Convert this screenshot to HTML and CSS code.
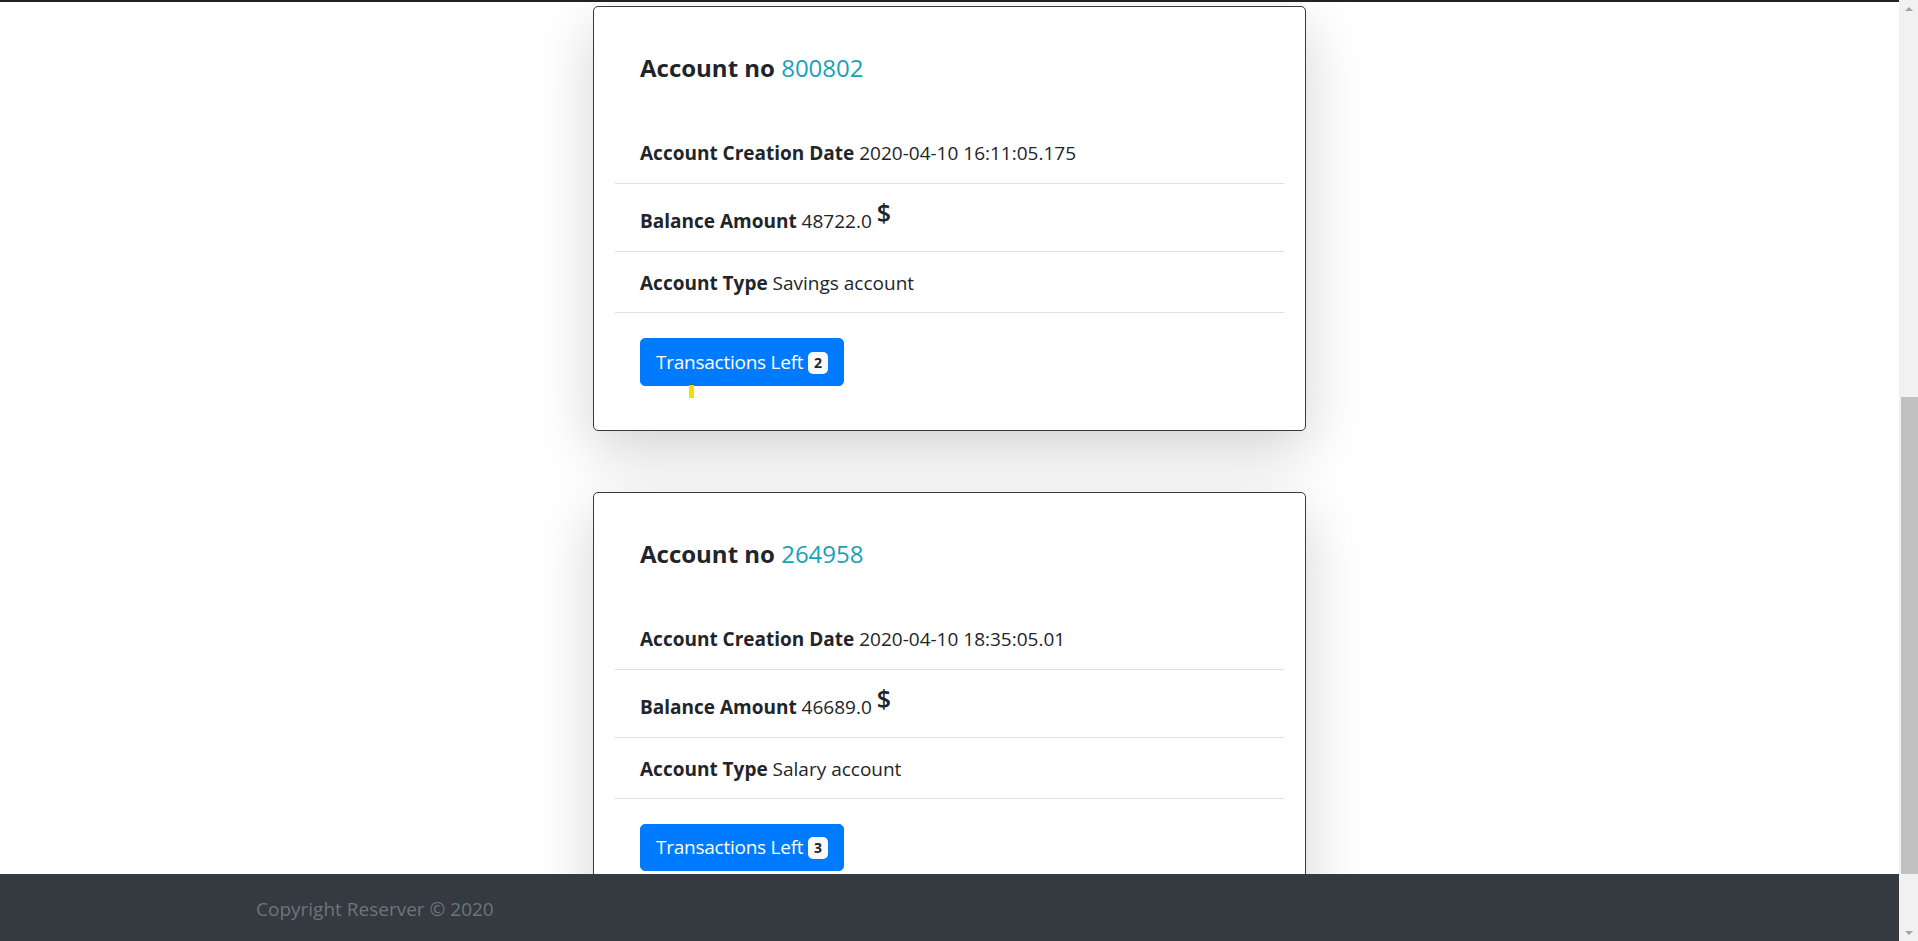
FILE: index.html
```html
<!DOCTYPE html>
<html lang="en">
<head>
<meta charset="utf-8">
<title>Accounts</title>
<link rel="stylesheet" href="styles.css">
</head>
<body>
<div class="page">
  <div class="main">
    <div class="topbar"></div>
    <div class="content">
      <div class="card">
        <div class="card-head">
          <h5 class="title">Account no <span class="accno">800802</span></h5>
        </div>
        <ul class="list">
          <li class="item item-first"><b>Account Creation Date</b> 2020-04-10 16:11:05.175</li>
          <li class="item item-balance"><b>Balance Amount</b> 48722.0 <sup class="cur">$</sup></li>
          <li class="item item-last"><b>Account Type</b> Savings account</li>
        </ul>
        <div class="actions">
          <button class="btn">Transactions Left <span class="badge">2</span></button>
          <span class="caret-mark"></span>
        </div>
      </div>
      <div class="card">
        <div class="card-head">
          <h5 class="title">Account no <span class="accno">264958</span></h5>
        </div>
        <ul class="list">
          <li class="item item-first"><b>Account Creation Date</b> 2020-04-10 18:35:05.01</li>
          <li class="item item-balance"><b>Balance Amount</b> 46689.0 <sup class="cur">$</sup></li>
          <li class="item item-last"><b>Account Type</b> Salary account</li>
        </ul>
        <div class="actions">
          <button class="btn">Transactions Left <span class="badge">3</span></button>
        </div>
      </div>
    </div>
    <footer class="footer"><span class="copy">Copyright Reserver © 2020</span></footer>
  </div>
  <div class="scrollbar">
    <div class="sb-btn sb-up"><span class="tri-up"></span></div>
    <div class="sb-track"><div class="sb-thumb"></div></div>
    <div class="sb-btn sb-down"><span class="tri-down"></span></div>
  </div>
</div>
</body>
</html>
```

FILE: styles.css
```css
html, body {
  margin: 0;
  padding: 0;
  height: 100%;
}
body {
  font-family: "Open Sans", "Noto Sans", "Liberation Sans", sans-serif;
  font-size: 19px;
  line-height: 30px;
  color: #212529;
  background: #fff;
  overflow: hidden;
}
.page {
  display: flex;
  height: 941px;
}
.main {
  flex: 1;
  display: flex;
  flex-direction: column;
  min-width: 0;
}
.topbar {
  height: 2px;
  background: #222;
  flex-shrink: 0;
}
.content {
  flex: 1;
  overflow: hidden;
  display: flex;
  flex-direction: column;
  align-items: center;
  gap: 61px;
  padding-top: 4px;
  position: relative;
}
.card {
  width: 713px;
  box-sizing: border-box;
  flex-shrink: 0;
  background: #fff;
  border: 1px solid #343a40;
  border-radius: 5px;
  box-shadow: 0 20px 60px rgba(0, 0, 0, .175);
  padding: 20px 21px 20px;
}
.card-head {
  padding: 26px 25px 0;
  margin-bottom: 39px;
}
.title {
  margin: 0;
  font-size: 24px;
  line-height: 30px;
  font-weight: 700;
}
.accno {
  color: #17a2b8;
  font-weight: 400;
}
.list {
  list-style: none;
  margin: 0;
  padding: 0;
}
.item {
  padding: 16px 25px 15px;
  border-bottom: 1px solid #dfdfdf;
}
.item b {
  font-weight: 700;
}
.item-balance {
  padding-top: 22px;
  padding-bottom: 15px;
}
.item-last {
  padding-top: 16px;
  padding-bottom: 14px;
}
.cur {
  font-size: 25px;
  line-height: 0;
  vertical-align: 6px;
  font-weight: 600;
}
.actions {
  padding: 25px 25px 24px;
  position: relative;
}
.btn {
  font-family: inherit;
  font-size: 19px;
  line-height: 30px;
  letter-spacing: -0.25px;
  color: #fff;
  background: #007bff;
  border: 1px solid #007bff;
  border-radius: 5px;
  padding: 7.75px 15px;
  margin: 0;
  cursor: pointer;
  display: inline-block;
  vertical-align: top;
}
.badge {
  display: inline-block;
  font-size: 14px;
  font-weight: 700;
  line-height: 1;
  letter-spacing: 0;
  padding: 4px 6px;
  border-radius: 5px;
  background: #f8f9fa;
  color: #212529;
  position: relative;
  top: -1px;
}
.caret-mark {
  position: absolute;
  left: 74px;
  top: 71px;
  width: 5px;
  height: 14px;
  background: #f0e000;
  border-top: 1px solid #3c6a2a;
  box-sizing: border-box;
}
.footer {
  height: 67px;
  flex-shrink: 0;
  background: #343a40;
  box-sizing: border-box;
  padding: 20px 0 0 256px;
}
.copy {
  color: #6c757d;
  font-size: 19px;
  line-height: 30px;
}
.scrollbar {
  width: 19px;
  flex-shrink: 0;
  background: #f1f1f1;
  display: flex;
  flex-direction: column;
}
.sb-btn {
  height: 17px;
  display: flex;
  align-items: center;
  justify-content: center;
}
.tri-up {
  width: 0;
  height: 0;
  border-left: 4px solid transparent;
  border-right: 4px solid transparent;
  border-bottom: 4px solid #a3a3a3;
}
.tri-down {
  width: 0;
  height: 0;
  border-left: 4px solid transparent;
  border-right: 4px solid transparent;
  border-top: 4px solid #a3a3a3;
}
.sb-track {
  flex: 1;
  padding-top: 380px;
  box-sizing: border-box;
}
.sb-thumb {
  height: 477px;
  margin-left: 2px;
  background: #c1c1c1;
}
```
